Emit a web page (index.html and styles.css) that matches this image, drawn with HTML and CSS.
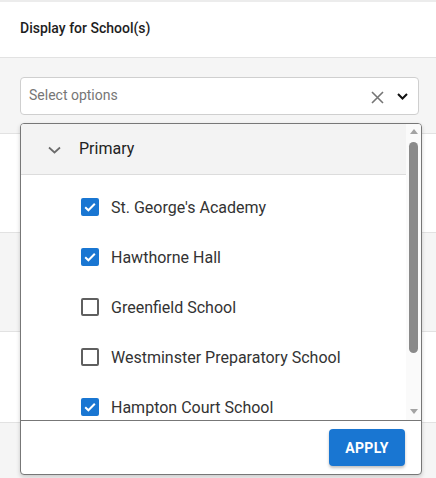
FILE: index.html
```html
<!DOCTYPE html>
<html>
<head>
<meta charset="utf-8">
<link rel="stylesheet" href="styles.css">
</head>
<body>
<div class="page">
  <div class="topbar"></div>
  <div class="row header-row"><span class="title">Display for School(s)</span></div>
  <div class="row filter-row">
    <div class="select">
      <span class="placeholder">Select options</span>
      <span class="select-icons">
        <svg class="clear" width="13" height="13" viewBox="0 0 13 13"><path d="M1 1L12 12M12 1L1 12" stroke="#757575" stroke-width="1.6" fill="none"/></svg>
        <svg class="caret" width="11" height="7" viewBox="0 0 11 7"><polyline points="1,1 5.5,5.5 10,1" stroke="#111" stroke-width="2" fill="none"/></svg>
      </span>
    </div>
  </div>
  <div class="row band white h98"></div>
  <div class="row band gray h98"></div>
  <div class="row band white h90"></div>
  <div class="row band gray h60"></div>

  <div class="panel">
    <div class="list-wrap">
      <div class="list">
        <div class="group">
          <svg class="group-chev" width="13" height="8" viewBox="0 0 13 8"><polyline points="1,1.5 6.5,6.5 12,1.5" stroke="#6b6b6b" stroke-width="1.7" fill="none"/></svg>
          <span class="group-label">Primary</span>
        </div>
        <div class="items">
          <div class="item"><span class="cb checked"><svg width="18" height="18" viewBox="0 0 18 18"><polyline points="4.2,9.2 7.4,12.3 13.8,5.8" stroke="#fff" stroke-width="2" fill="none"/></svg></span><span class="label">St. George's Academy</span></div>
          <div class="item"><span class="cb checked"><svg width="18" height="18" viewBox="0 0 18 18"><polyline points="4.2,9.2 7.4,12.3 13.8,5.8" stroke="#fff" stroke-width="2" fill="none"/></svg></span><span class="label">Hawthorne Hall</span></div>
          <div class="item"><span class="cb"></span><span class="label">Greenfield School</span></div>
          <div class="item"><span class="cb"></span><span class="label">Westminster Preparatory School</span></div>
          <div class="item"><span class="cb checked"><svg width="18" height="18" viewBox="0 0 18 18"><polyline points="4.2,9.2 7.4,12.3 13.8,5.8" stroke="#fff" stroke-width="2" fill="none"/></svg></span><span class="label">Hampton Court School</span></div>
        </div>
      </div>
      <div class="scrollbar">
        <span class="arrow up"></span>
        <span class="thumb"></span>
        <span class="arrow down"></span>
      </div>
    </div>
    <div class="footer">
      <button class="apply">APPLY</button>
    </div>
  </div>
</div>
</body>
</html>
```

FILE: styles.css
```css
* { box-sizing: border-box; }
html, body { margin: 0; padding: 0; }
body {
  width: 436px;
  height: 478px;
  overflow: hidden;
  background: #f6f6f6;
  font-family: Roboto, "Liberation Sans", Arial, sans-serif;
  color: #222;
}
.page { position: relative; width: 436px; height: 478px; }
.topbar { height: 2px; background: #ececec; }
.row { border-bottom: 1px solid #e2e2e2; }
.header-row {
  height: 56px;
  background: #fff;
  display: flex;
  align-items: center;
  padding-left: 20px;
  padding-bottom: 3px;
}
.title { font-size: 14px; font-weight: 500; color: #1e1e1e; }
.filter-row {
  height: 76px;
  background: #f5f5f5;
  padding: 19px 17px 0 20px;
}
.select {
  height: 38px;
  background: #fff;
  border: 1px solid #cfcfcf;
  border-radius: 4px;
  display: flex;
  align-items: center;
  justify-content: space-between;
  padding: 0 10px 0 8px;
}
.placeholder { font-size: 14px; color: #767676; margin-top: -3px; }
.select-icons { display: flex; align-items: center; gap: 13px; }
.clear { margin-top: 2px; }
.caret { margin-top: 0; }
.band.white { background: #fff; }
.band.gray { background: #f5f5f5; }
.h98 { height: 99px; }
.h90 { height: 91px; }
.h60 { height: 60px; border-bottom: none; }

.panel {
  position: absolute;
  left: 20px;
  top: 123px;
  width: 402px;
  height: 352px;
  background: #fff;
  border: 1px solid #777;
  border-radius: 4px;
  box-shadow: 0 2px 4px rgba(0,0,0,0.18);
  display: flex;
  flex-direction: column;
  overflow: hidden;
}
.list-wrap {
  height: 297px;
  display: flex;
  border-bottom: 1px solid #777;
}
.list { flex: 1; overflow: hidden; }
.group {
  height: 51px;
  background: #f3f3f3;
  border-bottom: 1px solid #dcdcdc;
  display: flex;
  align-items: center;
  padding-left: 27px;
}
.group-chev { margin-right: 18px; margin-top: 1px; }
.group-label { font-size: 16px; color: #222; margin-top: -1px; }
.items { padding-top: 7px; }
.item {
  height: 50px;
  display: flex;
  align-items: center;
  padding-left: 60px;
}
.cb {
  width: 18px;
  height: 18px;
  border: 2px solid #5f5f5f;
  border-radius: 2px;
  margin-right: 12px;
  flex: none;
  display: block;
}
.cb.checked { background: #1976d2; border: none; }
.cb svg { display: block; }
.label { font-size: 16px; color: #333; }

.scrollbar {
  width: 15px;
  background: #fafafa;
  position: relative;
  display: flex;
  flex-direction: column;
  align-items: center;
}
.arrow {
  width: 0;
  height: 0;
  border-left: 4px solid transparent;
  border-right: 4px solid transparent;
}
.arrow.up { border-bottom: 5px solid #a3a3a3; margin-top: 5px; }
.arrow.down { border-top: 5px solid #a3a3a3; margin-top: auto; margin-bottom: 6px; }
.thumb {
  width: 9px;
  height: 211px;
  background: #8a8a8a;
  border-radius: 5px;
  margin-top: 8px;
}
.footer {
  flex: 1;
  display: flex;
  justify-content: flex-end;
  align-items: flex-start;
  padding: 8px 16px 0 0;
}
.apply {
  width: 76px;
  height: 37px;
  background: #1976d2;
  color: #fff;
  border: none;
  border-radius: 4px;
  font-family: Roboto, "Liberation Sans", Arial, sans-serif;
  font-size: 14px;
  font-weight: 700;
  letter-spacing: 0.3px;
  box-shadow: 0 2px 3px rgba(0,0,0,0.25);
  padding: 0;
}
```
